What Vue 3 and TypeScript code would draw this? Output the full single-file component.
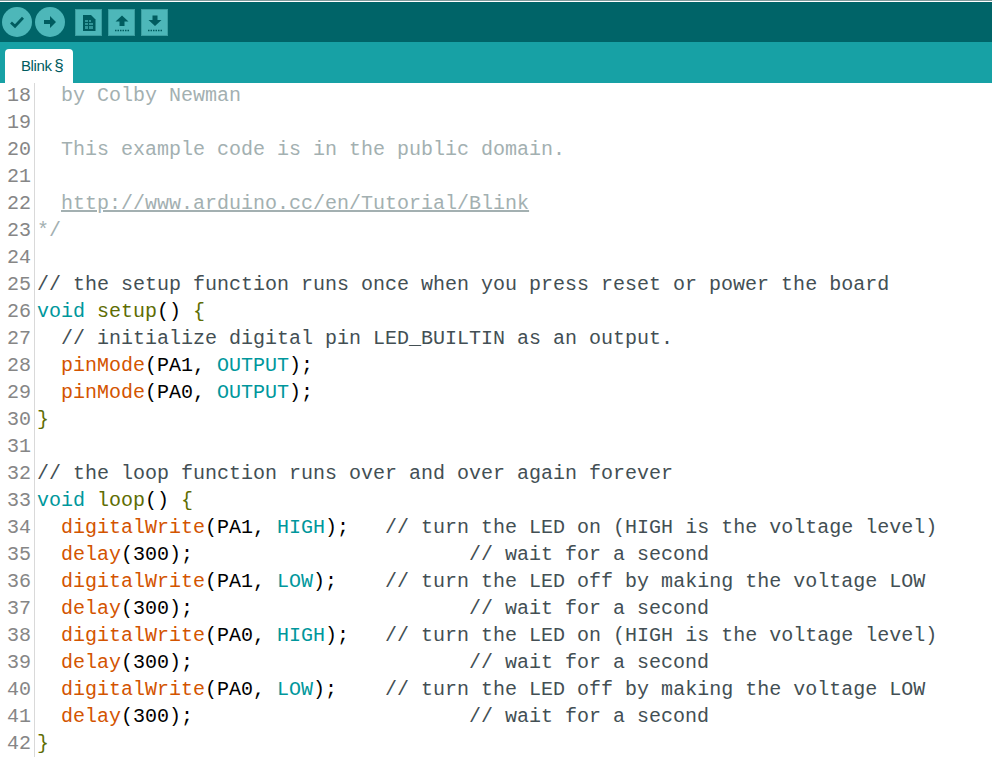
<script setup lang="ts">
type Seg = [string, string];
const c = 'cm', l = 'lc', k = 'kw', f = 'fn', s = 'st', p = 'pl', b = 'br';
const dw = (pin: string, val: string, pad: string, note: string): Seg[] => [
  [f, '  digitalWrite'], [p, `(${pin}, `], [k, val], [p, `);${pad}`], [l, note],
];
const wait: Seg[] = [[f, '  delay'], [p, '(300);'], [l, '                       // wait for a second']];
const on = '// turn the LED on (HIGH is the voltage level)';
const off = '// turn the LED off by making the voltage LOW';
const lines: Seg[][] = [
  [[c, '  by Colby Newman']],
  [],
  [[c, '  This example code is in the public domain.']],
  [],
  [[c, '  '], ['lk', 'http://www.arduino.cc/en/Tutorial/Blink']],
  [[c, '*/']],
  [],
  [[l, '// the setup function runs once when you press reset or power the board']],
  [[k, 'void'], [p, ' '], [s, 'setup'], [p, '() '], [b, '{']],
  [[l, '  // initialize digital pin LED_BUILTIN as an output.']],
  [[f, '  pinMode'], [p, '(PA1, '], [k, 'OUTPUT'], [p, ');']],
  [[f, '  pinMode'], [p, '(PA0, '], [k, 'OUTPUT'], [p, ');']],
  [[b, '}']],
  [],
  [[l, '// the loop function runs over and over again forever']],
  [[k, 'void'], [p, ' '], [s, 'loop'], [p, '() '], [b, '{']],
  dw('PA1', 'HIGH', '   ', on),
  wait,
  dw('PA1', 'LOW', '    ', off),
  wait,
  dw('PA0', 'HIGH', '   ', on),
  wait,
  dw('PA0', 'LOW', '    ', off),
  wait,
  [[b, '}']],
];
</script>

<template>
  <div class="ide">
    <header class="toolbar">
      <button class="round" aria-label="Verify">
        <svg width="16" height="14" viewBox="0 0 16 14"><path d="M2 7.500 6 11.200 14 2.800" fill="none" stroke="#005c5f" stroke-width="2.800" /></svg>
      </button>
      <button class="round" aria-label="Upload">
        <svg width="14" height="14" viewBox="0 0 14 14"><path d="M1 5h6V1l6 6-6 6V9H1z" fill="#005c5f" /></svg>
      </button>
      <button class="square first" aria-label="New">
        <svg width="14" height="18" viewBox="0 0 14 18"><path d="M1 1h8l4.500 4.500V17H1z" fill="#005c5f" /><path d="M3 6h3v2H3zM7 6h2v2H7zM3 9h3v2H3zM7 9h4v2H7zM3 12h3v3H3zM7 12h4v3H7z" fill="#4db7b9" opacity=".65" /></svg>
      </button>
      <button class="square" aria-label="Open">
        <svg width="16" height="18" viewBox="0 0 16 18"><path d="M8 1.500l6.500 6H10.500V12h-5V7.500H1.500z" fill="#005c5f" /><path d="M1 16.500h14" stroke="#005c5f" stroke-width="1.500" stroke-dasharray="1.500 1" /></svg>
      </button>
      <button class="square" aria-label="Save">
        <svg width="16" height="18" viewBox="0 0 16 18"><path d="M5.500 1.500h5V6h4L8 12 1.500 6h4z" fill="#005c5f" /><path d="M1 16.500h14" stroke="#005c5f" stroke-width="1.500" stroke-dasharray="1.500 1" /></svg>
      </button>
    </header>
    <nav class="tabs">
      <div class="tab">Blink <span class="sect">§</span></div>
    </nav>
    <main class="editor">
      <div v-for="(line, i) in lines" :key="i" class="row">
        <span class="num">{{ i + 18 }}</span>
        <code class="code"><span v-for="(seg, j) in line" :key="j" :class="seg[0]">{{ seg[1] }}</span></code>
      </div>
    </main>
  </div>
</template>

<style>
html, body { margin: 0; background: #fff; overflow: hidden; }
</style>

<style scoped>
.ide { box-sizing: border-box; width: 992px; height: 757px; overflow: hidden; background: #fff; border-top: 1px solid #7f9a9b; font-family: "Liberation Sans", Arial, sans-serif; }
.toolbar { box-sizing: border-box; height: 41px; padding: 5px 0 0 2px; display: flex; align-items: flex-start; gap: 3px; background: #006468; border-top: 1px solid #fff; }
.round { width: 30px; height: 30px; padding: 0; border: 0; border-radius: 50%; background: #4db7b9; display: flex; align-items: center; justify-content: center; }
.square { box-sizing: border-box; width: 27px; height: 27px; margin-left: 3px; margin-top: 2px; padding: 0; border: 1px solid #3c9fa1; background: #4db7b9; display: flex; align-items: center; justify-content: center; }
.square.first { margin-left: 7px; }
.tabs { box-sizing: border-box; height: 41px; padding: 7px 0 0 5px; display: flex; background: #17a1a5; }
.tab { box-sizing: border-box; width: 68px; height: 34px; border-radius: 4px 4px 0 0; background: #fff; color: #005c5f; font-size: 15px; line-height: 33px; padding-left: 16px; letter-spacing: -.4px; white-space: nowrap; }
.sect { font-size: 17px; margin-left: -1px; }
.editor { font-family: "Liberation Mono", "Courier New", monospace; font-size: 20px; line-height: 25px; }
.row { display: flex; height: 27px; }
.num { box-sizing: border-box; width: 35px; padding-left: 7px; border-right: 1px solid #d9d9d9; color: #868686; }
.code { padding-left: 2px; font: inherit; white-space: pre; color: #000; }
.cm { color: #a3b0b1; }
.lk { color: #a3b0b1; text-decoration: underline; }
.lc { color: #434f54; }
.kw { color: #00979c; }
.fn { color: #d35400; }
.st { color: #5e6d03; }
.br { color: #5e6d03; }
.pl { color: #000; }
</style>
